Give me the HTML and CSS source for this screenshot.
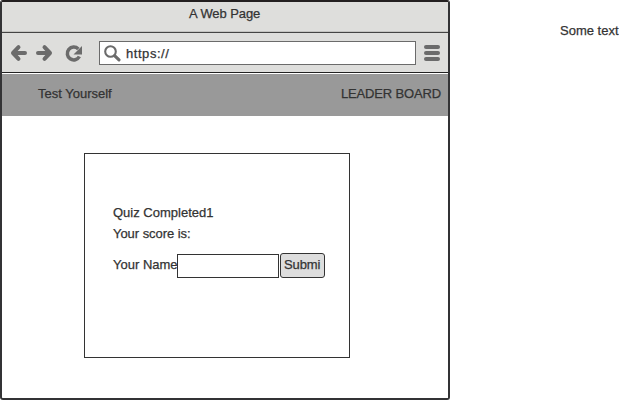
FILE: index.html
```
<!DOCTYPE html>
<html lang="en">
<head>
<meta charset="utf-8">
<title>A Web Page</title>
<link rel="stylesheet" href="styles.css">
</head>
<body>
<main class="browser">
  <header class="titlebar"><span class="title">A Web Page</span></header>
  <div class="toolbar">
    <svg class="nav-icons" width="97" height="38" viewBox="2 33 97 38" fill="none" stroke="#6b6b6b" stroke-width="4" stroke-linecap="round" stroke-linejoin="round">
      <path d="M18.500 47.200L13 53l5.500 5.800M13.500 53H25"/>
      <path d="M44.500 47.200L50 53l-5.500 5.800M49.500 53H38"/>
      <path stroke-width="3.500" stroke-linecap="butt" d="M78.300 49A6.400 6.400 0 1 0 79.400 56.500"/>
      <path fill="#6b6b6b" stroke="none" d="M82 46v8.500h-8.500z"/>
    </svg>
    <div class="address">
      <svg class="search" width="18" height="18" viewBox="0 0 18 18" fill="none" stroke="#6b6b6b" stroke-linecap="round">
        <circle cx="6.500" cy="6.500" r="5.300" stroke-width="2.100"/>
        <path d="M10.800 10.800L15 14.800" stroke-width="3.200"/>
      </svg>
      <span class="url">https://</span>
    </div>
    <div class="menu"><i></i><i></i><i></i></div>
  </div>
  <nav class="nav"><span class="brand">Test Yourself</span><span class="leader">LEADER BOARD</span></nav>
  <section class="card">
    <p class="done">Quiz Completed1</p>
    <p class="score">Your score is:</p>
    <div class="form">
      <label class="name" for="name">Your Name</label>
      <input id="name" type="text">
      <button type="button">Submi</button>
    </div>
  </section>
</main>
<aside class="note">Some text</aside>
</body>
</html>
```
FILE: styles.css
```
* { box-sizing: border-box; }
body {
  display: flex;
  margin: 0;
  width: 619px;
  height: 400px;
  overflow: hidden;
  background: #fff;
  color: #333;
  font: 13px/16px "Liberation Sans", Arial, sans-serif;
  white-space: nowrap;
  -webkit-text-stroke: 0.25px #333;
}
p { margin: 0; }
.browser {
  flex: none;
  width: 450px;
  height: 400px;
  border: 2px solid #333335;
  border-top-color: #231f20;
  border-radius: 3px;
  overflow: hidden;
}
.titlebar {
  height: 31px;
  padding: 4px 0 0 187px;
  background: #dededc;
  border-bottom: 1px solid #444;
  box-shadow: inset 0 -1px #c4c4c1;
}
.title { letter-spacing: -0.08px; }
.toolbar {
  display: flex;
  height: 40px;
  background: #dededc;
  border-bottom: 1px solid #222;
}
.nav-icons { flex: none; display: block; }
.address {
  display: flex;
  width: 317px;
  height: 24px;
  margin-top: 8px;
  padding-left: 4px;
  border: 1px solid #6b6b6b;
  background: #fff;
}
.search { flex: none; margin-top: 3px; }
.url { margin: 4px 0 0 4px; letter-spacing: 0.55px; }
.menu {
  display: flex;
  flex-direction: column;
  gap: 2px;
  margin: 12px 0 0 8px;
}
.menu i { width: 16px; height: 4px; border-radius: 2px; background: #6b6b6b; }
.nav {
  display: flex;
  justify-content: space-between;
  height: 42px;
  margin-top: 1px;
  padding: 12px 7px 0 36px;
  background: #999;
}
.leader { letter-spacing: -0.15px; }
.card {
  width: 266px;
  height: 205px;
  margin: 37px 0 0 82px;
  padding: 51px 0 0 28px;
  border: 1px solid #333;
}
.score { margin-top: 5px; letter-spacing: -0.05px; }
.form { display: flex; margin-top: 11px; }
.name { width: 64px; margin-top: 4px; }
input {
  width: 102px;
  height: 24px;
  margin: 1px 1px 0 0;
  padding: 0 3px;
  border: 1px solid #333;
  background: #fff;
  font: inherit;
}
button {
  width: 45px;
  height: 25px;
  padding: 0 0 1px 3px;
  border: 1px solid #333;
  border-radius: 3px;
  background: #ddd;
  color: #333;
  font: inherit;
  letter-spacing: -0.1px;
  text-align: left;
  -webkit-text-stroke: 0.25px #333;
}
.note { margin: 23px 0 0 110px; }
```
